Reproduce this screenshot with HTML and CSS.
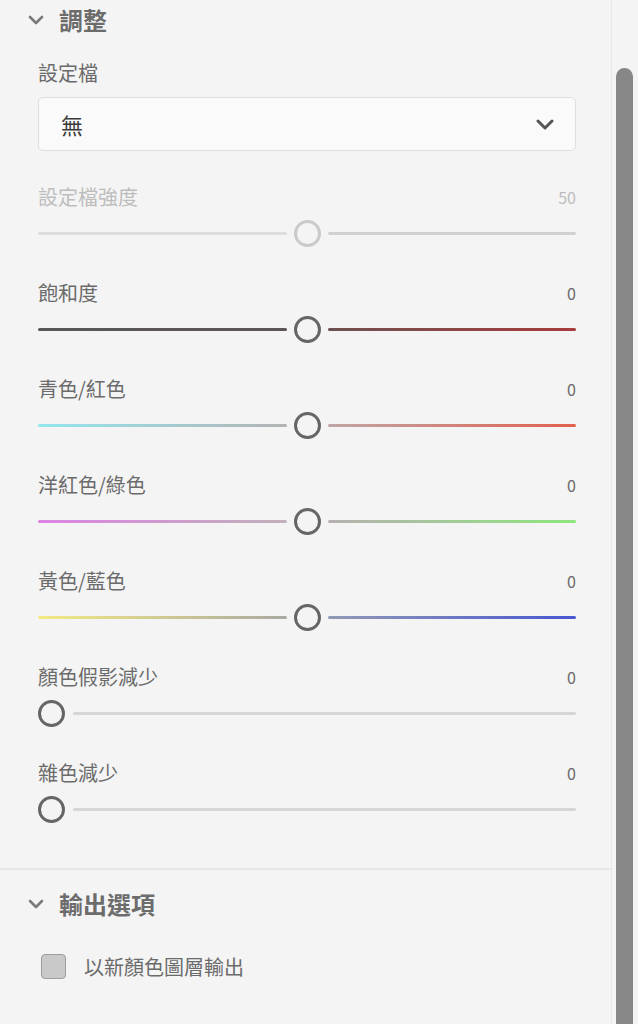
FILE: index.html
```html
<!DOCTYPE html>
<html lang="zh-Hant">
<head>
<meta charset="utf-8">
<title>調整</title>
<link rel="stylesheet" href="styles.css">
</head>
<body>
<div class="screen">
  <div class="panel">
    <section class="group adjust">
      <div class="group-head">
        <svg class="chev" viewBox="0 0 16 10" width="16" height="10"><polyline points="2,2 8,8 14,2"/></svg>
        <span class="group-title">調整</span>
      </div>
      <div class="field-label">設定檔</div>
      <div class="select">
        <span class="select-value">無</span>
        <svg class="select-chev" viewBox="0 0 18 11" width="18" height="11"><polyline points="2,2 9,9 16,2"/></svg>
      </div>

      <div class="slider-block disabled">
        <div class="slider-head"><span>設定檔強度</span><span class="val">50</span></div>
        <div class="slider mid plain-dis"><i class="track l"></i><i class="thumb"></i><i class="track r"></i></div>
      </div>

      <div class="slider-block">
        <div class="slider-head"><span>飽和度</span><span class="val">0</span></div>
        <div class="slider mid sat"><i class="track l"></i><i class="thumb"></i><i class="track r"></i></div>
      </div>

      <div class="slider-block">
        <div class="slider-head"><span>青色/紅色</span><span class="val">0</span></div>
        <div class="slider mid cr"><i class="track l"></i><i class="thumb"></i><i class="track r"></i></div>
      </div>

      <div class="slider-block">
        <div class="slider-head"><span>洋紅色/綠色</span><span class="val">0</span></div>
        <div class="slider mid mg"><i class="track l"></i><i class="thumb"></i><i class="track r"></i></div>
      </div>

      <div class="slider-block">
        <div class="slider-head"><span>黃色/藍色</span><span class="val">0</span></div>
        <div class="slider mid yb"><i class="track l"></i><i class="thumb"></i><i class="track r"></i></div>
      </div>

      <div class="slider-block">
        <div class="slider-head"><span>顏色假影減少</span><span class="val">0</span></div>
        <div class="slider start"><i class="thumb"></i><i class="track r"></i></div>
      </div>

      <div class="slider-block">
        <div class="slider-head"><span>雜色減少</span><span class="val">0</span></div>
        <div class="slider start"><i class="thumb"></i><i class="track r"></i></div>
      </div>
    </section>

    <section class="group output">
      <div class="group-head">
        <svg class="chev" viewBox="0 0 16 10" width="16" height="10"><polyline points="2,2 8,8 14,2"/></svg>
        <span class="group-title">輸出選項</span>
      </div>
      <label class="check-row">
        <span class="checkbox"></span>
        <span class="check-label">以新顏色圖層輸出</span>
      </label>
    </section>
  </div>
  <div class="scrollbar"><div class="scroll-thumb"></div></div>
</div>
</body>
</html>
```

FILE: styles.css
```css
* { box-sizing: border-box; }

html, body {
  margin: 0;
  padding: 0;
  background: #f4f4f4;
}

body {
  font-family: "Noto Sans CJK TC", "Noto Sans", sans-serif;
  color: #6b6b6b;
  width: 638px;
  height: 1024px;
  overflow: hidden;
}

.screen {
  display: flex;
  height: 1024px;
}

.panel {
  flex: 0 0 612px;
  border-right: 1px solid #e7e7e7;
  display: flex;
  flex-direction: column;
}

.scrollbar {
  flex: 1;
  padding: 68px 5px 0 4px;
}

.scroll-thumb {
  width: 17px;
  height: 1000px;
  background: #878787;
  border-radius: 9px 9px 0 0;
}

/* group */
.group {
  padding: 0 35px 0 38px;
}

.adjust {
  padding-bottom: 13px;
  border-bottom: 2px solid #e6e6e6;
}

.group-head {
  display: flex;
  align-items: center;
  height: 40px;
  margin-left: -10px;
  gap: 15px;
}

.output .group-head {
  margin-top: 14px;
}

.chev {
  flex: 0 0 16px;
  fill: none;
  stroke: #7a7a7a;
  stroke-width: 2.6;
  stroke-linecap: round;
  stroke-linejoin: round;
}

.group-title {
  font-size: 24px;
  font-weight: 700;
  color: #6c6c6c;
  line-height: 40px;
}

.field-label {
  margin-top: 19px;
  font-size: 20px;
  line-height: 28px;
  height: 28px;
}

.select {
  margin-top: 10px;
  margin-bottom: 32px;
  height: 54px;
  border: 1px solid #dedede;
  border-radius: 5px;
  background: #fafafa;
  display: flex;
  align-items: center;
  justify-content: space-between;
  padding: 0 21px 0 22px;
}

.select-value {
  font-size: 22px;
  color: #3a3a3a;
}

.select-chev {
  fill: none;
  stroke: #555;
  stroke-width: 3;
  stroke-linecap: round;
  stroke-linejoin: round;
}

/* sliders */
.slider-block {
  margin-bottom: 32px;
}

.slider-head {
  display: flex;
  justify-content: space-between;
  align-items: center;
  height: 28px;
  font-size: 20px;
  line-height: 28px;
}

.val {
  font-size: 16px;
  color: #6b6b6b;
}

.slider {
  margin-top: 8px;
  height: 28px;
  display: flex;
  align-items: center;
}

.track {
  flex: 1;
  height: 3px;
  border-radius: 2px;
  background: #d6d6d6;
}

.thumb {
  flex: 0 0 27px;
  height: 27px;
  border: 3px solid #666;
  border-radius: 50%;
  background: #f4f4f4;
}

.mid .thumb { margin: 0 7px; }
.start .thumb { margin-right: 8px; }

.disabled .slider-head,
.disabled .val { color: #bdbdbd; }
.plain-dis .thumb { border-color: #cacaca; }
.plain-dis .l { background: #dedede; }
.plain-dis .r { background: #d0d0d0; }

.sat .l { background: linear-gradient(to right, #585858, #5d5454); }
.sat .r { background: linear-gradient(to right, #6e5050, #a83c3c); }

.cr .l { background: linear-gradient(to right, #93e6ef, #b3b3b3); }
.cr .r { background: linear-gradient(to right, #c0a6a6, #e2604f); }

.mg .l { background: linear-gradient(to right, #dc84e4, #c1b1ba); }
.mg .r { background: linear-gradient(to right, #b6b0b0, #8ee67e); }

.yb .l { background: linear-gradient(to right, #f3ea82, #a9a9a2); }
.yb .r { background: linear-gradient(to right, #9299b4, #4757d2); }

/* checkbox */
.check-row {
  margin-top: 28px;
  margin-left: 3px;
  display: flex;
  align-items: center;
  gap: 18px;
  height: 28px;
}

.checkbox {
  width: 25px;
  height: 25px;
  border: 1.5px solid #9d9d9d;
  border-radius: 4px;
  background: #c9c9c9;
}

.check-label {
  font-size: 20px;
  color: #6b6b6b;
}
```
